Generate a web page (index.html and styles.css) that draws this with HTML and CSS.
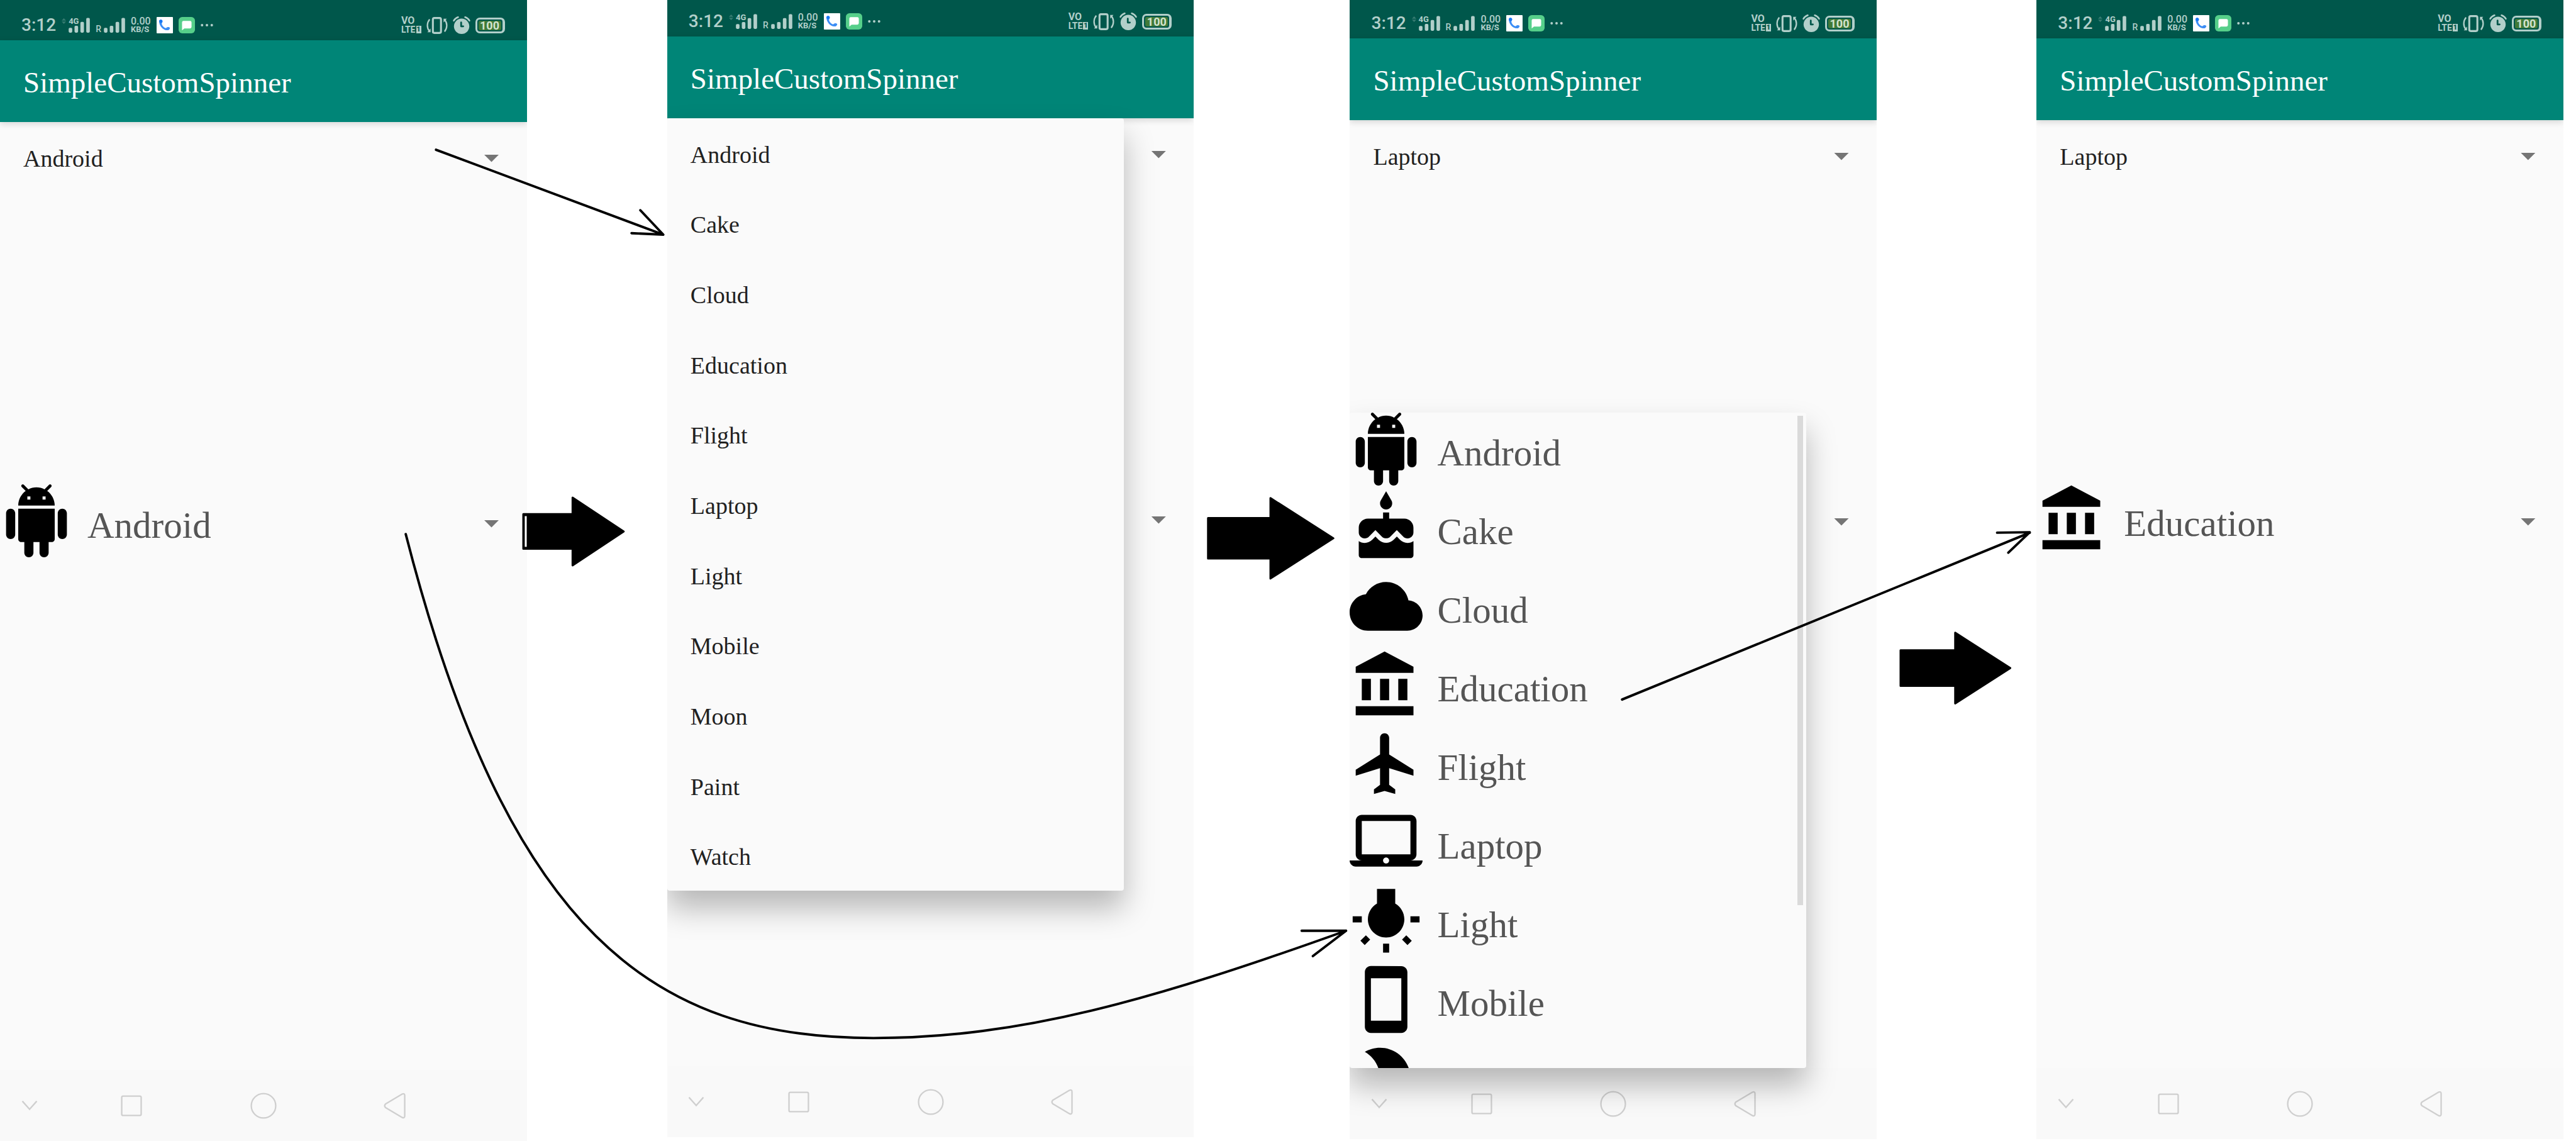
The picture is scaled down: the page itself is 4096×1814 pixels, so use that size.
FILE: index.html
```html
<!DOCTYPE html>
<html lang="en">
<head>
<meta charset="utf-8">
<title>SimpleCustomSpinner</title>
<link rel="stylesheet" href="styles.css">
</head>
<body>
<svg class="sprite" aria-hidden="true">
  <symbol id="android" viewBox="0 0 24 24"><path d="M6 18c0 .55.45 1 1 1h1v3.5c0 .83.67 1.5 1.5 1.5s1.5-.67 1.5-1.5V19h2v3.5c0 .83.67 1.5 1.5 1.5s1.5-.67 1.5-1.5V19h1c.55 0 1-.45 1-1V8H6v10zM3.5 8C2.67 8 2 8.67 2 9.5v7c0 .83.67 1.5 1.5 1.5S5 17.33 5 16.5v-7C5 8.67 4.33 8 3.5 8zm17 0c-.83 0-1.5.67-1.5 1.5v7c0 .83.67 1.5 1.5 1.5s1.5-.67 1.5-1.5v-7c0-.83-.67-1.5-1.5-1.5zm-4.97-5.84l1.3-1.3c.2-.2.2-.51 0-.71-.2-.2-.51-.2-.71 0l-1.48 1.48C13.85 1.23 12.95 1 12 1c-.96 0-1.86.23-2.66.63L7.85.15c-.2-.2-.51-.2-.71 0-.2.2-.2.51 0 .71l1.31 1.31C6.97 3.26 6 5.01 6 7h12c0-1.99-.97-3.75-2.47-4.84zM10 5H9V4h1v1zm5 0h-1V4h1v1z"/></symbol>
  <symbol id="cake" viewBox="0 0 24 24"><path d="M12 6c1.11 0 2-.9 2-2 0-.38-.1-.73-.29-1.03L12 0l-1.71 2.97c-.19.3-.29.65-.29 1.03 0 1.1.9 2 2 2zm4.6 9.99l-1.07-1.07-1.08 1.07c-1.3 1.3-3.58 1.31-4.89 0l-1.07-1.07-1.09 1.07C6.75 16.64 5.88 17 4.96 17c-.73 0-1.4-.23-1.96-.61V21c0 .55.45 1 1 1h16c.55 0 1-.45 1-1v-4.61c-.56.38-1.23.61-1.96.61-.92 0-1.79-.36-2.44-1.01zM18 9h-5V7h-2v2H6c-1.66 0-3 1.34-3 3v1.54c0 1.08.88 1.96 1.96 1.96.52 0 1.02-.2 1.38-.57l2.14-2.13 2.13 2.13c.74.74 2.03.74 2.77 0l2.14-2.13 2.13 2.13c.37.37.86.57 1.38.57 1.08 0 1.96-.88 1.96-1.96V12C21 10.34 19.66 9 18 9z"/></symbol>
  <symbol id="cloud" viewBox="0 0 24 24"><path d="M19.35 10.04C18.67 6.59 15.64 4 12 4 9.11 4 6.6 5.64 5.35 8.04 2.34 8.36 0 10.91 0 14c0 3.31 2.69 6 6 6h13c2.76 0 5-2.24 5-5 0-2.64-2.05-4.78-4.65-4.96z"/></symbol>
  <symbol id="education" viewBox="0 0 24 24"><path d="M4 10v7h3v-7H4zm6 0v7h3v-7h-3zM2 22h19v-3H2v3zm14-12v7h3v-7h-3zm-4.5-9L2 6v2h19V6l-9.5-5z"/></symbol>
  <symbol id="flight" viewBox="0 0 24 24"><path d="M21 16v-2l-8-5V3.5c0-.83-.67-1.5-1.5-1.5S10 2.67 10 3.5V9l-8 5v2l8-2.5V19l-2 1.5V22l3.5-1 3.5 1v-1.5L13 19v-5.5l8 2.5z"/></symbol>
  <symbol id="laptop" viewBox="0 0 24 24"><path d="M20 18c1.1 0 1.99-.9 1.99-2L22 5c0-1.1-.9-2-2-2H4c-1.1 0-2 .9-2 2v11c0 1.1.9 2 2 2H0c0 1.1.9 2 2 2h20c1.1 0 2-.9 2-2h-4zM4 5h16v11H4V5zm8 14c-.55 0-1-.45-1-1s.45-1 1-1 1 .45 1 1-.45 1-1 1z"/></symbol>
  <symbol id="light" viewBox="0 0 24 24"><path d="M3.55 18.54l1.41 1.41 1.8-1.79-1.41-1.41-1.8 1.79zM11 22.45h2V19.5h-2v2.95zM4 10.5H1v2h3v-2zm11-4.19V1.5H9v4.81C7.21 7.35 6 9.28 6 11.5c0 3.31 2.69 6 6 6s6-2.69 6-6c0-2.22-1.21-4.15-3-5.19zm5 4.19v2h3v-2h-3zm-2.76 7.66l1.79 1.8 1.41-1.41-1.8-1.79-1.4 1.4z"/></symbol>
  <symbol id="mobile" viewBox="0 0 24 24"><path d="M17 1.01L7 1c-1.1 0-1.99.9-1.99 2v18c0 1.1.89 2 1.99 2h10c1.1 0 2-.9 2-2V3c0-1.1-.9-1.99-2-1.99zM17 19H7V5h10v14z"/></symbol>
  <symbol id="moon" viewBox="0 0 24 24"><path d="M10 2c-1.82 0-3.53.5-5 1.35C7.99 5.08 10 8.3 10 12s-2.01 6.92-5 8.65C6.47 21.5 8.18 22 10 22c5.52 0 10-4.48 10-10S15.52 2 10 2z"/></symbol>
  <symbol id="bars" viewBox="0 0 130 116"><rect x="0" y="74" width="22" height="30" rx="7"/><rect x="36" y="62" width="22" height="42" rx="7"/><rect x="72" y="38" width="22" height="66" rx="7"/><rect x="108" y="14" width="22" height="90" rx="7"/></symbol>
  <symbol id="updown" viewBox="0 0 28 36"><path d="M14 0l14 15H0zM0 21h28L14 36z"/></symbol>
  <symbol id="call" viewBox="0 0 100 100"><rect width="100" height="100" rx="4" fill="#fff"/><path d="M16 22c8-10 20-6 20 4 0 8-6 12-4 18 4 12 14 21 25 24 8-9 20-9 25-1-2 9-8 14-17 14C38 81 13 50 16 22z" fill="#3d8ef5"/><circle cx="26" cy="26" r="10" fill="#1878f5"/></symbol>
  <symbol id="chat" viewBox="0 0 100 100"><rect width="100" height="100" rx="22" fill="#56cf8a"/><path d="M30 24h40q9 0 9 9v28q0 9-9 9H35L21 82V33q0-9 9-9z" fill="#fff"/></symbol>
  <symbol id="more" viewBox="0 0 78 16"><circle cx="8" cy="8" r="8"/><circle cx="39" cy="8" r="8"/><circle cx="70" cy="8" r="8"/></symbol>
  <symbol id="vibrate" viewBox="0 0 132 104"><rect x="40" y="6" width="50" height="92" rx="9" fill="none" stroke="currentColor" stroke-width="12"/><path d="M20 14C2 36 2 66 18 86M112 90C130 68 130 38 114 18" fill="none" stroke="currentColor" stroke-width="9"/><path d="M26 70v24H6zM106 34V10h20z"/></symbol>
  <symbol id="alarm" viewBox="0 0 108 110"><circle cx="54" cy="62" r="48"/><path d="M5 27Q14 11 32 5M103 27Q94 11 76 5" fill="none" stroke="currentColor" stroke-width="10" stroke-linecap="round"/><path d="M51 38v24h13" fill="none" stroke="#00574b" stroke-width="11" stroke-linecap="round" stroke-linejoin="round"/></symbol>
  <symbol id="hide" viewBox="0 0 34 22"><path d="M2 2l15 17L32 2" fill="none" stroke="currentColor" stroke-width="3"/></symbol>
  <symbol id="recent" viewBox="0 0 44 44"><rect x="2" y="2" width="40" height="40" rx="3" fill="none" stroke="currentColor" stroke-width="3"/></symbol>
  <symbol id="home" viewBox="0 0 54 54"><circle cx="27" cy="27" r="25" fill="none" stroke="currentColor" stroke-width="3"/></symbol>
  <symbol id="back" viewBox="0 0 46 54"><path d="M38 3L4 23q-4 4 0 8l34 20q5 2 5-3V6q0-5-5-3z" fill="none" stroke="currentColor" stroke-width="3" stroke-linejoin="round"/></symbol>
</svg>

<main class="stage">
  <section class="phone">
    <div class="status">
      <div class="status-group status-left">
        <span class="clock">3:12</span>
        <span class="signal signal-4g"><svg class="updown"><use href="#updown"/></svg><svg class="bars"><use href="#bars"/></svg><b class="net">4G</b></span>
        <span class="signal"><span class="roam">R</span><svg class="bars"><use href="#bars"/></svg></span>
        <span class="rate"><span class="rate-value">0.00</span><span>KB/S</span></span>
        <svg class="app"><use href="#call"/></svg><svg class="app"><use href="#chat"/></svg><svg class="more"><use href="#more"/></svg>
      </div>
      <div class="status-group">
        <span class="volte"><span class="vo">VO</span><span class="lte">LTE<b class="slot">1</b></span></span>
        <svg class="vibrate"><use href="#vibrate"/></svg><svg class="alarm"><use href="#alarm"/></svg>
        <span class="battery"><span class="level">100</span></span>
      </div>
    </div>
    <h1 class="toolbar">SimpleCustomSpinner</h1>
    <div class="screen">
      <label class="spinner"><select aria-label="Item"><option>Android</option><option>Cake</option></select><span class="caret"></span></label>
      <label class="spinner spinner-icon"><svg class="icon"><use href="#android"/></svg><select aria-label="Item with icon"><option>Android</option><option>Cake</option></select><span class="caret"></span></label>
    </div>
    <nav class="navbar">
      <button aria-label="Hide"><svg class="nav-hide"><use href="#hide"/></svg></button><button aria-label="Recent"><svg class="nav-recent"><use href="#recent"/></svg></button><button aria-label="Home"><svg class="nav-home"><use href="#home"/></svg></button><button aria-label="Back"><svg class="nav-back"><use href="#back"/></svg></button>
    </nav>
  </section>

  <section class="phone phone-2">
    <div class="status">
      <div class="status-group status-left">
        <span class="clock">3:12</span>
        <span class="signal signal-4g"><svg class="updown"><use href="#updown"/></svg><svg class="bars"><use href="#bars"/></svg><b class="net">4G</b></span>
        <span class="signal"><span class="roam">R</span><svg class="bars"><use href="#bars"/></svg></span>
        <span class="rate"><span class="rate-value">0.00</span><span>KB/S</span></span>
        <svg class="app"><use href="#call"/></svg><svg class="app"><use href="#chat"/></svg><svg class="more"><use href="#more"/></svg>
      </div>
      <div class="status-group">
        <span class="volte"><span class="vo">VO</span><span class="lte">LTE<b class="slot">1</b></span></span>
        <svg class="vibrate"><use href="#vibrate"/></svg><svg class="alarm"><use href="#alarm"/></svg>
        <span class="battery"><span class="level">100</span></span>
      </div>
    </div>
    <h1 class="toolbar">SimpleCustomSpinner</h1>
    <div class="screen">
      <div class="spinner"><span class="caret"></span></div>
      <div class="spinner spinner-icon"><span class="caret"></span></div>
      <ul class="popup popup-text" role="listbox" aria-label="Item">
        <li role="option">Android</li>
        <li role="option">Cake</li>
        <li role="option">Cloud</li>
        <li role="option">Education</li>
        <li role="option">Flight</li>
        <li role="option">Laptop</li>
        <li role="option">Light</li>
        <li role="option">Mobile</li>
        <li role="option">Moon</li>
        <li role="option">Paint</li>
        <li role="option">Watch</li>
      </ul>
    </div>
    <nav class="navbar">
      <button aria-label="Hide"><svg class="nav-hide"><use href="#hide"/></svg></button><button aria-label="Recent"><svg class="nav-recent"><use href="#recent"/></svg></button><button aria-label="Home"><svg class="nav-home"><use href="#home"/></svg></button><button aria-label="Back"><svg class="nav-back"><use href="#back"/></svg></button>
    </nav>
  </section>

  <section class="phone phone-3">
    <div class="status">
      <div class="status-group status-left">
        <span class="clock">3:12</span>
        <span class="signal signal-4g"><svg class="updown"><use href="#updown"/></svg><svg class="bars"><use href="#bars"/></svg><b class="net">4G</b></span>
        <span class="signal"><span class="roam">R</span><svg class="bars"><use href="#bars"/></svg></span>
        <span class="rate"><span class="rate-value">0.00</span><span>KB/S</span></span>
        <svg class="app"><use href="#call"/></svg><svg class="app"><use href="#chat"/></svg><svg class="more"><use href="#more"/></svg>
      </div>
      <div class="status-group">
        <span class="volte"><span class="vo">VO</span><span class="lte">LTE<b class="slot">1</b></span></span>
        <svg class="vibrate"><use href="#vibrate"/></svg><svg class="alarm"><use href="#alarm"/></svg>
        <span class="battery"><span class="level">100</span></span>
      </div>
    </div>
    <h1 class="toolbar">SimpleCustomSpinner</h1>
    <div class="screen">
      <label class="spinner"><select aria-label="Item"><option>Laptop</option><option>Light</option></select><span class="caret"></span></label>
      <div class="spinner spinner-icon"><span class="caret"></span></div>
      <div class="popup popup-icons">
        <ul class="icon-list" role="listbox" aria-label="Item with icon">
          <li role="option"><svg class="icon"><use href="#android"/></svg><span>Android</span></li>
          <li role="option"><svg class="icon"><use href="#cake"/></svg><span>Cake</span></li>
          <li role="option"><svg class="icon"><use href="#cloud"/></svg><span>Cloud</span></li>
          <li role="option"><svg class="icon"><use href="#education"/></svg><span>Education</span></li>
          <li role="option"><svg class="icon"><use href="#flight"/></svg><span>Flight</span></li>
          <li role="option"><svg class="icon"><use href="#laptop"/></svg><span>Laptop</span></li>
          <li role="option"><svg class="icon"><use href="#light"/></svg><span>Light</span></li>
          <li role="option"><svg class="icon"><use href="#mobile"/></svg><span>Mobile</span></li>
          <li role="option" aria-label="Moon"><svg class="icon"><use href="#moon"/></svg></li>
        </ul>
        <div class="scrollbar"><div class="thumb"></div></div>
      </div>
    </div>
    <nav class="navbar">
      <button aria-label="Hide"><svg class="nav-hide"><use href="#hide"/></svg></button><button aria-label="Recent"><svg class="nav-recent"><use href="#recent"/></svg></button><button aria-label="Home"><svg class="nav-home"><use href="#home"/></svg></button><button aria-label="Back"><svg class="nav-back"><use href="#back"/></svg></button>
    </nav>
  </section>

  <section class="phone phone-4">
    <div class="status">
      <div class="status-group status-left">
        <span class="clock">3:12</span>
        <span class="signal signal-4g"><svg class="updown"><use href="#updown"/></svg><svg class="bars"><use href="#bars"/></svg><b class="net">4G</b></span>
        <span class="signal"><span class="roam">R</span><svg class="bars"><use href="#bars"/></svg></span>
        <span class="rate"><span class="rate-value">0.00</span><span>KB/S</span></span>
        <svg class="app"><use href="#call"/></svg><svg class="app"><use href="#chat"/></svg><svg class="more"><use href="#more"/></svg>
      </div>
      <div class="status-group">
        <span class="volte"><span class="vo">VO</span><span class="lte">LTE<b class="slot">1</b></span></span>
        <svg class="vibrate"><use href="#vibrate"/></svg><svg class="alarm"><use href="#alarm"/></svg>
        <span class="battery"><span class="level">100</span></span>
      </div>
    </div>
    <h1 class="toolbar">SimpleCustomSpinner</h1>
    <div class="screen">
      <label class="spinner"><select aria-label="Item"><option>Laptop</option><option>Light</option></select><span class="caret"></span></label>
      <label class="spinner spinner-icon"><svg class="icon"><use href="#education"/></svg><select aria-label="Item with icon"><option>Education</option><option>Flight</option></select><span class="caret"></span></label>
    </div>
    <nav class="navbar">
      <button aria-label="Hide"><svg class="nav-hide"><use href="#hide"/></svg></button><button aria-label="Recent"><svg class="nav-recent"><use href="#recent"/></svg></button><button aria-label="Home"><svg class="nav-home"><use href="#home"/></svg></button><button aria-label="Back"><svg class="nav-back"><use href="#back"/></svg></button>
    </nav>
  </section>

  <!-- arrows linking the four screens -->
  <svg class="arrows" viewBox="0 0 5282 2339" preserveAspectRatio="none" aria-hidden="true">
    <path class="block" d="M1073 1054H1174V1020L1279 1089.5L1174 1159V1125H1073z"/>
    <path class="block" d="M2477 1062H2605V1021L2734 1103.5L2605 1186V1145H2477z"/>
    <path class="block" d="M3897 1333H4009V1297L4122 1369.5L4009 1442V1406H3897z"/>
    <rect x="1076" y="1058" width="4" height="63" fill="#fff"/>
    <path class="line" d="M894 307L1360 481M1313 431L1360 481L1295 478"/>
    <path class="line" d="M832 1095C1042 1914 1341 2128 1791 2128C2091 2128 2361 2051 2760 1908M2669 1908L2760 1908L2692 1960"/>
    <path class="line" d="M3326 1434L4162 1092M4095 1092L4162 1091L4118 1133"/>
  </svg>
</main>
</body>
</html>
```
FILE: styles.css
```css
* { box-sizing: border-box; }

body {
  margin: 0;
  background: #fff;
  font-family: "Liberation Serif", "Times New Roman", serif;
}

.sprite { display: none; }

svg { display: block; flex: none; fill: currentColor; }

.stage {
  position: relative;
  display: grid;
  grid-template-columns: 1080fr 288fr 1080fr 320fr 1080fr 328fr 1080fr 26fr;
  min-height: 100vh;
}

.phone {
  grid-column: 1;
  grid-row: 1;
  display: flex;
  flex-direction: column;
  min-width: 0;
  overflow: hidden;
  background: #fafafa;
}
.phone-2 { grid-column: 3; margin-bottom: 6px; }
.phone-3 { grid-column: 5; margin-bottom: 3px; }
.phone-4 { grid-column: 7; margin-bottom: 3px; }

/* status bar */
.status {
  display: flex;
  justify-content: space-between;
  align-items: flex-end;
  height: 64px;
  padding: 0 35px 9px 34px;
  background: #00574b;
  color: #b2cfca;
  font-family: Roboto, sans-serif;
}
.phone-2 .status { height: 58px; }
.phone-3 .status, .phone-4 .status { height: 61px; }

.status-group { display: flex; align-items: center; gap: 8px; height: 30px; }
.status-left { gap: 9px; }

.clock { font-size: 28px; line-height: 30px; font-weight: 500; }

.signal { position: relative; display: flex; align-items: flex-end; gap: 4px; height: 30px; }
.signal-4g { align-items: flex-start; }
.bars { width: 34px; height: 30px; }
.updown { width: 7px; height: 9px; margin-top: 4px; opacity: .3; }
.net { position: absolute; left: 11px; top: 1px; font-size: 13px; line-height: 16px; }
.roam { font-size: 14px; line-height: 18px; font-weight: 500; }

.rate { display: flex; flex-direction: column; font-size: 13px; line-height: 13px; font-weight: 700; }
.rate-value { font-size: 16px; font-weight: 500; }

.app { width: 26px; height: 26px; }
.more { width: 20px; height: 4px; }

.volte { display: flex; flex-direction: column; font-weight: 700; }
.vo { font-size: 16px; line-height: 14px; }
.lte { display: flex; align-items: center; gap: 1px; font-size: 14px; line-height: 14px; }
.slot { width: 8px; background: #b2cfca; color: #00574b; font-size: 11px; line-height: 12px; text-align: center; }
.vibrate { width: 34px; height: 27px; }
.alarm { width: 28px; height: 28px; }

.battery {
  display: flex;
  width: 47px;
  height: 25px;
  padding: 2px;
  border: 3px solid #b2cfca;
  border-right-width: 4px;
  border-radius: 7px;
}
.level {
  flex: 1;
  border-radius: 3px;
  background: #417a38;
  color: #d3e3cf;
  font-size: 18px;
  line-height: 16px;
  font-weight: 700;
  text-align: center;
}

/* toolbar */
.toolbar {
  position: relative;
  z-index: 3;
  margin: 0;
  padding: 4px 37px 0;
  background: #008577;
  box-shadow: 0 3px 10px rgba(0, 0, 0, .15);
  color: #fff;
  font-size: 47px;
  line-height: 126px;
  font-weight: 400;
}

/* spinners */
.screen {
  position: relative;
  z-index: 2;
  flex: 1;
  display: grid;
  grid-template-rows: auto 464fr auto 806fr;
}
.phone-2 .screen, .phone-3 .screen { z-index: 4; }

.spinner {
  grid-row: 1;
  display: flex;
  align-items: center;
  height: 112px;
  padding: 3px 44px 0 37px;
  color: #212121;
  font-size: 38px;
}
.spinner select {
  flex: 1;
  min-width: 0;
  margin: 0;
  padding: 0;
  border: 0;
  appearance: none;
  background: none;
  color: inherit;
  font: inherit;
}
.spinner-icon {
  grid-row: 3;
  gap: 23px;
  height: 125px;
  padding: 0 44px 0 0;
  color: #555;
  font-size: 59px;
}
.spinner-icon select { padding-top: 4px; }

.icon { width: 116px; height: 116px; align-self: flex-start; color: #000; }

.caret {
  width: 24px;
  height: 12px;
  margin-left: auto;
  background: #757575;
  clip-path: polygon(0 0, 100% 0, 50% 100%);
}

/* open lists */
.popup {
  position: absolute;
  left: 0;
  top: 0;
  width: 86.67%;
  margin: 0;
  padding: 0;
  border-radius: 4px;
  background: #fafafa;
  box-shadow: 0 28px 48px rgba(0, 0, 0, .27);
  list-style: none;
}
.popup-text {
  display: grid;
  grid-auto-rows: 1fr;
  min-height: 1228px;
  color: #212121;
  font-size: 38px;
}
.popup-text li { display: flex; align-items: center; padding: 4px 37px 0; }

.popup-icons {
  top: 465px;
  bottom: 0;
  display: flex;
  justify-content: space-between;
  overflow: hidden;
}
.icon-list { margin: 0; padding: 0; list-style: none; color: #555; font-size: 59px; }
.icon-list li { display: flex; gap: 23px; height: 125px; }
.icon-list span { padding-top: 4px; line-height: 120px; }

.scrollbar { width: 9px; margin: 5px 5px 0 0; }
.thumb { height: 75%; background: #dadada; }

/* navigation bar */
.navbar {
  position: relative;
  z-index: 1;
  display: grid;
  grid-template-columns: 120fr 300fr 240fr 300fr 120fr;
  height: 113px;
  background: #f9f9f9;
}
.navbar button {
  display: flex;
  align-items: center;
  justify-content: center;
  padding: 0;
  border: 0;
  background: none;
  color: #cfcfcf;
}
.nav-hide { width: 26px; height: 17px; }
.nav-recent { width: 34px; height: 34px; }
.nav-home { width: 42px; height: 42px; }
.nav-back { width: 36px; height: 42px; }

/* arrows drawn over the screens */
.arrows { position: absolute; inset: 0; z-index: 10; width: 100%; height: 100%; pointer-events: none; }
.block { stroke: #000; stroke-width: 4; stroke-linejoin: round; }
.line { fill: none; stroke: #000; stroke-width: 5; stroke-linecap: round; stroke-linejoin: round; }
```
